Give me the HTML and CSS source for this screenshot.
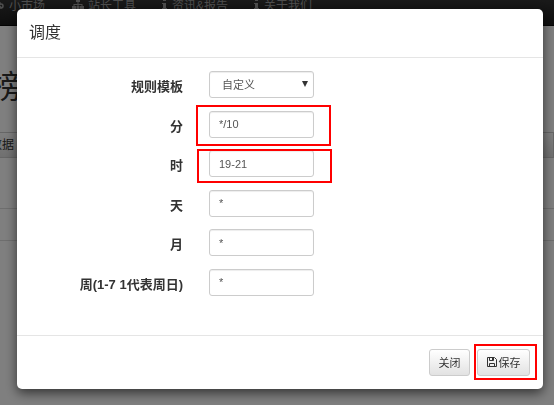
FILE: index.html
```html
<!DOCTYPE html>
<html lang="zh-CN">
<head>
    <meta charset="utf-8">
    <title>调度</title>
    <link rel="stylesheet" href="styles.css">
</head>
<body>

<div class="page">
    <nav class="navbar">
        <a href="#" class="nav-market">
            <svg class="icon" viewBox="0 0 12 12"><path d="M2 2l5 3-4 4M4 6l5 4" fill="none" stroke="currentColor" stroke-width="1.5"/><circle cx="8" cy="8" r="2" fill="none" stroke="currentColor" stroke-width="1.5"/></svg>
            小市场
        </a>
        <a href="#" class="nav-tools">
            <svg class="icon" viewBox="0 0 12 12"><path d="M4 1h4v3H4zM0 8h4v3H0zM4.5 8h3v3h-3zM8 8h4v3H8zM5.5 4h1v4h-1zM1.5 6h9v1h-9zM1.5 6h1v2h-1zM9.5 6h1v2h-1z" fill="currentColor"/></svg>
            站长工具
        </a>
        <a href="#" class="nav-news">
            <svg class="icon icon-info" viewBox="0 0 6 12"><path d="M1 1h3v2H1zM0 5h4v5h1v1H0v-1h1V6H0z" fill="currentColor"/></svg>
            资讯&amp;报告
        </a>
        <a href="#" class="nav-about">
            <svg class="icon icon-info" viewBox="0 0 6 12"><path d="M1 1h3v2H1zM0 5h4v5h1v1H0v-1h1V6H0z" fill="currentColor"/></svg>
            关于我们
        </a>
    </nav>
    <h1>榜</h1>
    <div class="toolbar">数据</div>
    <div class="list-row"></div>
    <div class="list-row list-row-short"></div>
</div>

<div class="backdrop">
    <form class="modal">
        <div class="modal-header">
            <h2>调度</h2>
        </div>

        <div class="modal-body">
            <label for="template">规则模板</label>
            <div class="field">
                <select id="template">
                    <option>自定义</option>
                </select>
                <svg class="arrow" viewBox="0 0 6 6"><path d="M0 0h6L3 6z" fill="#333"/></svg>
            </div>

            <label for="minute">分</label>
            <div class="field">
                <input type="text" id="minute" value="*/10">
                <span class="mark mark-minute"></span>
            </div>

            <label for="hour">时</label>
            <div class="field">
                <input type="text" id="hour" value="19-21">
                <span class="mark mark-hour"></span>
            </div>

            <label for="day">天</label>
            <div class="field"><input type="text" id="day" value="*"></div>

            <label for="month">月</label>
            <div class="field"><input type="text" id="month" value="*"></div>

            <label for="week">周(1-7 1代表周日)</label>
            <div class="field"><input type="text" id="week" value="*"></div>
        </div>

        <div class="modal-footer">
            <button type="button">关闭</button>
            <div class="field">
                <button type="button" class="save">
                    <svg class="disk" viewBox="0 0 10 10" fill="none" stroke="currentColor"><path d="M.5.5h7l2 2v7h-9zM2.5.5v3h4v-3M2.5 9.5v-3h5v3M5.5 1v2"/></svg>
                    保存
                </button>
                <span class="mark mark-save"></span>
            </div>
        </div>
    </form>
</div>

</body>
</html>
```

FILE: styles.css
```css
* {
    box-sizing: border-box;
}

body {
    margin: 0;
    height: 100vh;
    overflow: hidden;
    background-color: #fff;
    color: #333;
    font-family: "Liberation Sans", "Noto Sans CJK SC", sans-serif;
    font-size: 12px;
}

/* page behind the dialog */
.navbar {
    display: flex;
    height: 26px;
    background-color: #222;
    background-image: linear-gradient(#333, #1c1c1c);
    border-bottom: 1px solid #080808;
}

.navbar a {
    display: flex;
    align-items: center;
    gap: 4px;
    height: 20px;
    margin-top: -6px;
    color: #9d9d9d;
    text-decoration: none;
    white-space: nowrap;
}

.nav-market {
    margin-left: -7px;
}

.nav-tools {
    margin-left: 27px;
}

.nav-news {
    margin-left: 26px;
}

.nav-about {
    margin-left: 26px;
}

.icon {
    width: 12px;
    height: 12px;
}

.icon-info {
    width: 6px;
}

h1 {
    margin: 37px 0 0 -10px;
    height: 69px;
    font-size: 32px;
    font-weight: normal;
    line-height: 48px;
}

.toolbar {
    height: 26px;
    margin-left: -11px;
    line-height: 24px;
    border: 1px solid #ccc;
    background-image: linear-gradient(#fff, #e0e0e0);
}

.list-row {
    height: 51px;
    border-bottom: 1px solid #ddd;
}

.list-row-short {
    height: 32px;
}

.backdrop {
    position: fixed;
    inset: 0;
    padding: 9px 11px 0 17px;
    background-color: rgba(0, 0, 0, 0.5);
}

/* dialog */
.modal {
    background-color: #fff;
    border-radius: 5px;
    box-shadow: 0 4px 12px rgba(0, 0, 0, 0.6);
}

.modal-header {
    padding: 12px;
    border-bottom: 1px solid #e5e5e5;
}

.modal-header h2 {
    margin: 0;
    font-size: 16px;
    font-weight: normal;
    line-height: 24px;
}

.modal-body {
    display: grid;
    grid-template-columns: 166px 105px;
    grid-auto-rows: 27px;
    column-gap: 26px;
    align-content: space-between;
    height: 277px;
    padding: 13px 0 39px;
}

.modal-body label {
    padding-top: 6px;
    font-size: 13px;
    font-weight: bold;
    line-height: 20px;
    text-align: right;
}

.field {
    position: relative;
}

.field input,
.field select {
    display: block;
    width: 100%;
    height: 27px;
    padding: 0 9px;
    border: 1px solid #ccc;
    border-radius: 3px;
    background-color: #fff;
    box-shadow: inset 0 1px 1px rgba(0, 0, 0, 0.075);
    color: #555;
    font-family: inherit;
    font-size: 11px;
}

.field select {
    padding-left: 12px;
    appearance: none;
}

.arrow {
    position: absolute;
    top: 10px;
    right: 6px;
    width: 6px;
    height: 6px;
    pointer-events: none;
}

.modal-footer {
    display: flex;
    justify-content: flex-end;
    gap: 7px;
    padding: 13px;
    border-top: 1px solid #e5e5e5;
}

button {
    display: flex;
    align-items: center;
    justify-content: center;
    gap: 2px;
    width: 41px;
    height: 27px;
    padding: 0 0 2px;
    border: 1px solid #ccc;
    border-radius: 3px;
    background-image: linear-gradient(#fff, #e2e2e2);
    color: #333;
    font-family: inherit;
    font-size: 11px;
}

.save {
    width: 53px;
}

.disk {
    width: 10px;
    height: 10px;
}

/* red frames */
.mark {
    position: absolute;
    border: 2px solid #f00;
    pointer-events: none;
}

.mark-minute {
    inset: -6px -17px -8px -13px;
}

.mark-hour {
    inset: -1px -18px -6px -12px;
}

.mark-save {
    inset: -5px -7px -4px -3px;
}
```
